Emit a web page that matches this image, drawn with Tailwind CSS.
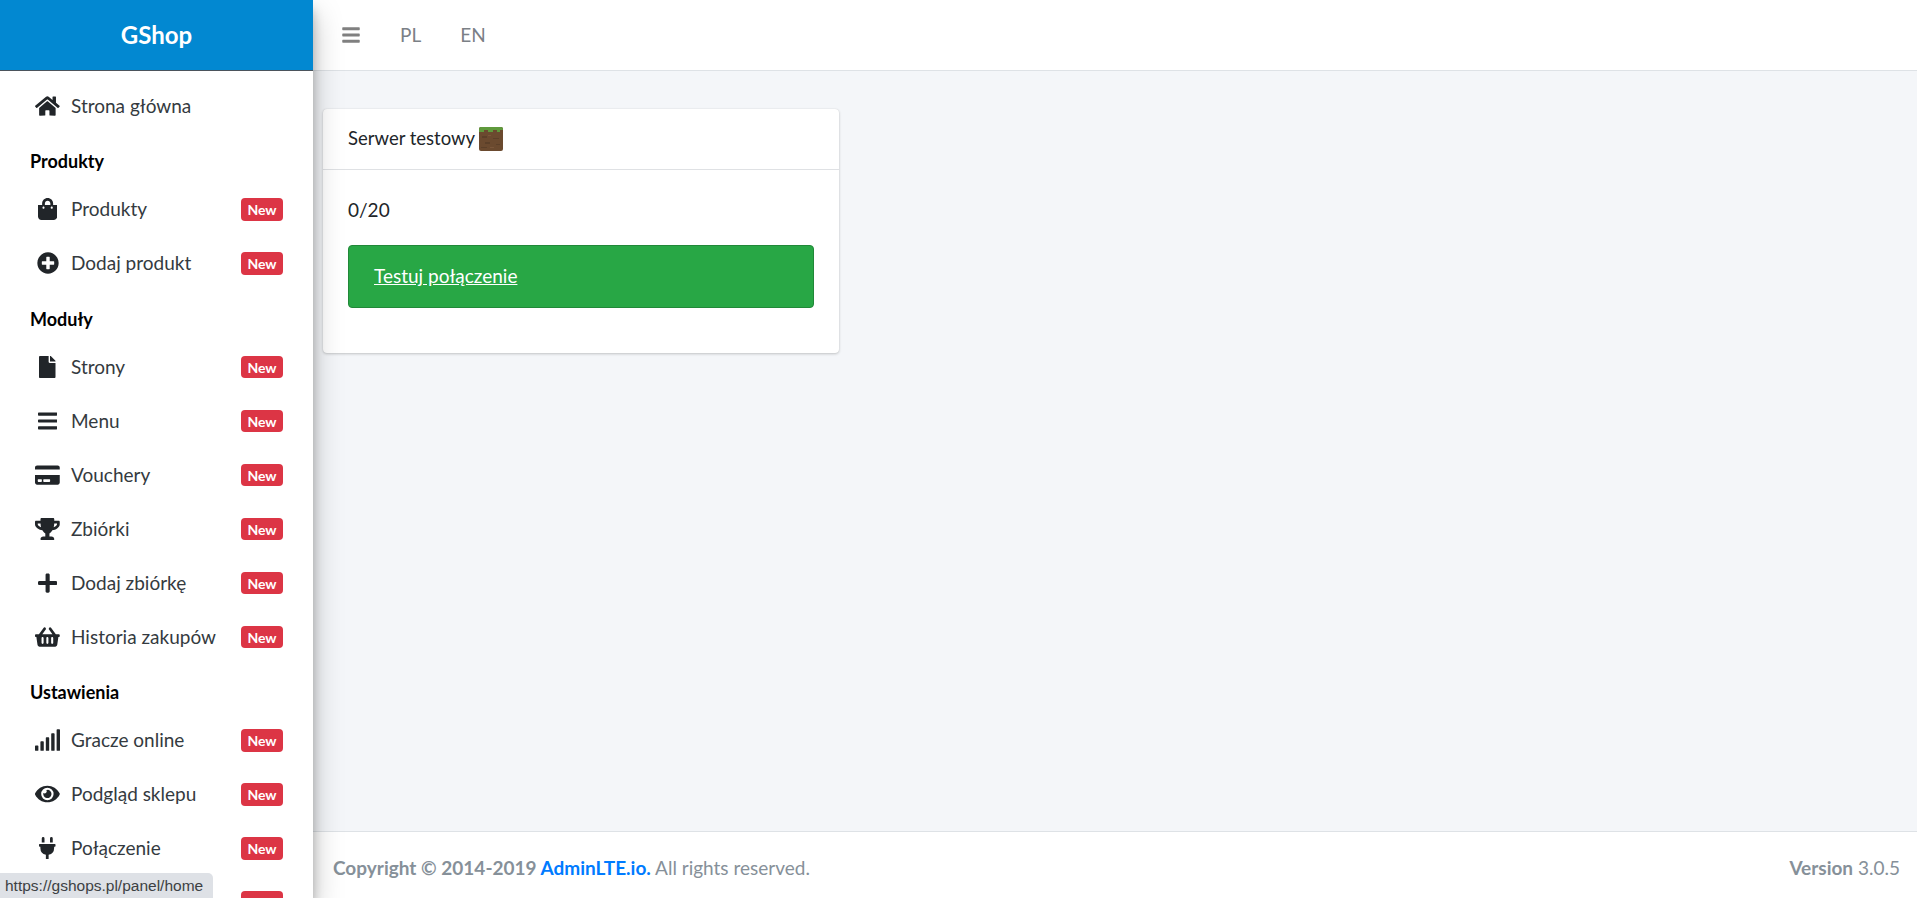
<!DOCTYPE html>
<html lang="pl">
<head>
    <meta charset="UTF-8">
    <title>GShop</title>
    <script src="https://cdn.jsdelivr.net/npm/@tailwindcss/browser@4"></script>
</head>
<body class="h-screen overflow-hidden bg-[#f4f6f9] font-['Lato',sans-serif] text-[19px] text-[#212529]">
<div class="flex h-full">
    <!-- Sidebar -->
    <aside class="relative z-10 w-[313px] shrink-0 h-full overflow-hidden bg-white shadow-[0_14px_28px_rgba(0,0,0,0.25),0_10px_10px_rgba(0,0,0,0.22)]">
        <div class="h-[71px] flex items-center justify-center bg-[#0288d1] border-b border-[#4b545c] text-white text-[24px] font-bold">GShop</div>
        <nav class="pt-2 text-[#343a40]">
            <a class="h-[54px] flex items-center pl-[35px] pr-[30px]">
                <span class="w-[25px] mr-[11px] flex justify-center"><svg class="h-[22px] fill-[#212529]" viewBox="0 0 576 512"><path d="M280.37 148.26L96 300.11V464a16 16 0 0 0 16 16l112.06-.29a16 16 0 0 0 15.92-16V368a16 16 0 0 1 16-16h64a16 16 0 0 1 16 16v95.64a16 16 0 0 0 16 16.05L464 480a16 16 0 0 0 16-16V300L295.67 148.26a12.19 12.19 0 0 0-15.3 0zM571.6 251.47L488 182.56V44.05a12 12 0 0 0-12-12h-56a12 12 0 0 0-12 12v72.61L318.47 43a48 48 0 0 0-61 0L4.34 251.47a12 12 0 0 0-1.6 16.9l25.5 31A12 12 0 0 0 45.15 301l235.22-193.74a12.19 12.19 0 0 1 15.3 0L530.9 301a12 12 0 0 0 16.9-1.6l25.5-31a12 12 0 0 0-1.7-16.93z"/></svg></span>
                <span class="flex-1">Strona główna</span>
            </a>
            <div class="mt-[7px] h-[42px] flex items-center pl-[30px] text-black font-bold text-[18px]">Produkty</div>
            <a class="h-[54px] flex items-center pl-[35px] pr-[30px]">
                <span class="w-[25px] mr-[11px] flex justify-center"><svg class="h-[22px] fill-[#212529]" viewBox="0 0 448 512"><path d="M352 160v-32C352 57.42 294.579 0 224 0 153.42 0 96 57.42 96 128v32H0v272c0 44.183 35.817 80 80 80h288c44.183 0 80-35.817 80-80V160h-96zm-192-32c0-35.29 28.71-64 64-64s64 28.71 64 64v32H160v-32zm160 120c-13.255 0-24-10.745-24-24s10.745-24 24-24 24 10.745 24 24-10.745 24-24 24zm-192 0c-13.255 0-24-10.745-24-24s10.745-24 24-24 24 10.745 24 24-10.745 24-24 24z"/></svg></span>
                <span class="flex-1">Produkty</span>
                <span class="w-[42px] h-[23px] flex items-center justify-center rounded bg-[#dc3545] text-white text-[14px] font-bold">New</span>
            </a>
            <a class="h-[54px] flex items-center pl-[35px] pr-[30px]">
                <span class="w-[25px] mr-[11px] flex justify-center"><svg class="h-[22px] fill-[#212529]" viewBox="0 0 512 512"><path d="M256 8C119 8 8 119 8 256s111 248 248 248 248-111 248-248S393 8 256 8zm144 276c0 6.6-5.4 12-12 12h-92v92c0 6.6-5.4 12-12 12h-56c-6.6 0-12-5.4-12-12v-92h-92c-6.6 0-12-5.4-12-12v-56c0-6.6 5.4-12 12-12h92v-92c0-6.6 5.4-12 12-12h56c6.6 0 12 5.4 12 12v92h92c6.6 0 12 5.4 12 12v56z"/></svg></span>
                <span class="flex-1">Dodaj produkt</span>
                <span class="w-[42px] h-[23px] flex items-center justify-center rounded bg-[#dc3545] text-white text-[14px] font-bold">New</span>
            </a>
            <div class="mt-2 h-[42px] flex items-center pl-[30px] text-black font-bold text-[18px]">Moduły</div>
            <a class="h-[54px] flex items-center pl-[35px] pr-[30px]">
                <span class="w-[25px] mr-[11px] flex justify-center"><svg class="h-[22px] fill-[#212529]" viewBox="0 0 384 512"><path d="M224 136V0H24C10.7 0 0 10.7 0 24v464c0 13.3 10.7 24 24 24h336c13.3 0 24-10.7 24-24V160H248c-13.2 0-24-10.8-24-24zm160-14.1v6.1H256V0h6.1c6.4 0 12.5 2.5 17 7l97.9 98c4.5 4.5 7 10.6 7 16.9z"/></svg></span>
                <span class="flex-1">Strony</span>
                <span class="w-[42px] h-[22px] flex items-center justify-center rounded bg-[#dc3545] text-white text-[14px] font-bold">New</span>
            </a>
            <a class="h-[54px] flex items-center pl-[35px] pr-[30px]">
                <span class="w-[25px] mr-[11px] flex justify-center"><svg class="h-[22px] fill-[#212529]" viewBox="0 0 448 512"><path d="M16 132h416c8.837 0 16-7.163 16-16V76c0-8.837-7.163-16-16-16H16C7.163 60 0 67.163 0 76v40c0 8.837 7.163 16 16 16zm0 160h416c8.837 0 16-7.163 16-16v-40c0-8.837-7.163-16-16-16H16c-8.837 0-16 7.163-16 16v40c0 8.837 7.163 16 16 16zm0 160h416c8.837 0 16-7.163 16-16v-40c0-8.837-7.163-16-16-16H16c-8.837 0-16 7.163-16 16v40c0 8.837 7.163 16 16 16z"/></svg></span>
                <span class="flex-1">Menu</span>
                <span class="w-[42px] h-[22px] flex items-center justify-center rounded bg-[#dc3545] text-white text-[14px] font-bold">New</span>
            </a>
            <a class="h-[54px] flex items-center pl-[35px] pr-[30px]">
                <span class="w-[25px] mr-[11px] flex justify-center"><svg class="h-[22px] fill-[#212529]" viewBox="0 0 576 512"><path d="M0 432c0 26.5 21.5 48 48 48h480c26.5 0 48-21.5 48-48V256H0v176zm192-68c0-6.6 5.4-12 12-12h136c6.6 0 12 5.4 12 12v40c0 6.6-5.4 12-12 12H204c-6.6 0-12-5.4-12-12v-40zm-128 0c0-6.6 5.4-12 12-12h72c6.6 0 12 5.4 12 12v40c0 6.6-5.4 12-12 12H76c-6.6 0-12-5.4-12-12v-40zM576 80v48H0V80c0-26.5 21.5-48 48-48h480c26.5 0 48 21.5 48 48z"/></svg></span>
                <span class="flex-1">Vouchery</span>
                <span class="w-[42px] h-[22px] flex items-center justify-center rounded bg-[#dc3545] text-white text-[14px] font-bold">New</span>
            </a>
            <a class="h-[54px] flex items-center pl-[35px] pr-[30px]">
                <span class="w-[25px] mr-[11px] flex justify-center"><svg class="h-[22px] fill-[#212529]" viewBox="0 0 576 512"><path d="M552 64H448V24c0-13.3-10.7-24-24-24H152c-13.3 0-24 10.7-24 24v40H24C10.7 64 0 74.7 0 88v56c0 35.7 22.5 72.4 61.9 100.7 31.5 22.7 69.8 37.1 110 41.7C203.3 338.5 240 360 240 360v72h-48c-35.3 0-64 20.7-64 56v12c0 6.6 5.4 12 12 12h296c6.6 0 12-5.4 12-12v-12c0-35.3-28.7-56-64-56h-48v-72s36.7-21.5 68.1-73.6c40.3-4.6 78.6-19 110-41.7 39.3-28.3 61.9-65 61.9-100.7V88c0-13.3-10.7-24-24-24zM99.3 192.8C74.9 175.2 64 155.6 64 144v-16h64.2c1 32.6 5.8 61.2 12.8 86.2-15.1-5.2-29.2-12.4-41.7-21.4zM512 144c0 16.1-17.7 36.1-35.3 48.8-12.5 9-26.7 16.2-41.8 21.4 7-25 11.8-53.6 12.8-86.2H512v16z"/></svg></span>
                <span class="flex-1">Zbiórki</span>
                <span class="w-[42px] h-[22px] flex items-center justify-center rounded bg-[#dc3545] text-white text-[14px] font-bold">New</span>
            </a>
            <a class="h-[54px] flex items-center pl-[35px] pr-[30px]">
                <span class="w-[25px] mr-[11px] flex justify-center"><svg class="h-[22px] fill-[#212529]" viewBox="0 0 448 512"><path d="M416 208H272V64c0-17.67-14.33-32-32-32h-32c-17.67 0-32 14.33-32 32v144H32c-17.67 0-32 14.33-32 32v32c0 17.67 14.33 32 32 32h144v144c0 17.67 14.33 32 32 32h32c17.67 0 32-14.33 32-32V304h144c17.67 0 32-14.33 32-32v-32c0-17.67-14.33-32-32-32z"/></svg></span>
                <span class="flex-1">Dodaj zbiórkę</span>
                <span class="w-[42px] h-[22px] flex items-center justify-center rounded bg-[#dc3545] text-white text-[14px] font-bold">New</span>
            </a>
            <a class="h-[54px] flex items-center pl-[35px] pr-[30px]">
                <span class="w-[25px] mr-[11px] flex justify-center"><svg class="h-[22px] fill-[#212529]" viewBox="0 0 576 512"><path d="M576 216v16c0 13.255-10.745 24-24 24h-8l-26.113 182.788C514.509 462.435 494.257 480 470.37 480H105.63c-23.887 0-44.139-17.565-47.518-41.212L32 256h-8c-13.255 0-24-10.745-24-24v-16c0-13.255 10.745-24 24-24h67.341l106.78-146.821c10.395-14.292 30.407-17.453 44.701-7.058 14.293 10.395 17.453 30.408 7.058 44.701L170.477 192h235.046L326.12 82.821c-10.395-14.292-7.234-34.306 7.059-44.701 14.291-10.395 34.306-7.235 44.701 7.058L484.659 192H552c13.255 0 24 10.745 24 24zM312 392V280c0-13.255-10.745-24-24-24s-24 10.745-24 24v112c0 13.255 10.745 24 24 24s24-10.745 24-24zm112 0V280c0-13.255-10.745-24-24-24s-24 10.745-24 24v112c0 13.255 10.745 24 24 24s24-10.745 24-24zm-224 0V280c0-13.255-10.745-24-24-24s-24 10.745-24 24v112c0 13.255 10.745 24 24 24s24-10.745 24-24z"/></svg></span>
                <span class="flex-1">Historia zakupów</span>
                <span class="w-[42px] h-[22px] flex items-center justify-center rounded bg-[#dc3545] text-white text-[14px] font-bold">New</span>
            </a>
            <div class="mt-[7px] h-[42px] flex items-center pl-[30px] text-black font-bold text-[18px]">Ustawienia</div>
            <a class="h-[54px] flex items-center pl-[35px] pr-[30px]">
                <span class="w-[25px] mr-[11px] flex justify-center"><svg class="h-[22px] w-[27px] max-w-none shrink-0 fill-[#212529]" viewBox="0 0 640 512"><path d="M216 288h-48c-8.84 0-16 7.16-16 16v192c0 8.84 7.16 16 16 16h48c8.84 0 16-7.16 16-16V304c0-8.84-7.16-16-16-16zM88 384H40c-8.84 0-16 7.16-16 16v96c0 8.84 7.16 16 16 16h48c8.84 0 16-7.16 16-16v-96c0-8.84-7.16-16-16-16zm256-192h-48c-8.84 0-16 7.16-16 16v288c0 8.84 7.16 16 16 16h48c8.84 0 16-7.16 16-16V208c0-8.84-7.16-16-16-16zm128-96h-48c-8.84 0-16 7.16-16 16v384c0 8.84 7.16 16 16 16h48c8.84 0 16-7.16 16-16V112c0-8.84-7.16-16-16-16zM600 0h-48c-8.84 0-16 7.16-16 16v480c0 8.84 7.16 16 16 16h48c8.84 0 16-7.16 16-16V16c0-8.84-7.16-16-16-16z"/></svg></span>
                <span class="flex-1">Gracze online</span>
                <span class="w-[42px] h-[23px] flex items-center justify-center rounded bg-[#dc3545] text-white text-[14px] font-bold">New</span>
            </a>
            <a class="h-[54px] flex items-center pl-[35px] pr-[30px]">
                <span class="w-[25px] mr-[11px] flex justify-center"><svg class="h-[22px] fill-[#212529]" viewBox="0 0 576 512"><path d="M572.52 241.4C518.29 135.59 410.93 64 288 64S57.68 135.64 3.48 241.41a32.35 32.35 0 0 0 0 29.19C57.71 376.41 165.07 448 288 448s230.32-71.64 284.52-177.41a32.35 32.35 0 0 0 0-29.19zM288 400a144 144 0 1 1 144-144 143.93 143.93 0 0 1-144 144zm0-240a95.31 95.31 0 0 0-25.31 3.79 47.85 47.85 0 0 1-66.9 66.9A95.78 95.78 0 1 0 288 160z"/></svg></span>
                <span class="flex-1">Podgląd sklepu</span>
                <span class="w-[42px] h-[23px] flex items-center justify-center rounded bg-[#dc3545] text-white text-[14px] font-bold">New</span>
            </a>
            <a class="h-[54px] flex items-center pl-[35px] pr-[30px]">
                <span class="w-[25px] mr-[11px] flex justify-center"><svg class="h-[22px] fill-[#212529]" viewBox="0 0 384 512"><path d="M320,32a32,32,0,0,0-64,0v96h64Zm48,128H16A16,16,0,0,0,0,176v32a16,16,0,0,0,16,16H32v32A160.07,160.07,0,0,0,160,412.8V512h64V412.8A160.07,160.07,0,0,0,352,256V224h16a16,16,0,0,0,16-16V176A16,16,0,0,0,368,160ZM128,32a32,32,0,0,0-64,0v96h64Z"/></svg></span>
                <span class="flex-1">Połączenie</span>
                <span class="w-[42px] h-[23px] flex items-center justify-center rounded bg-[#dc3545] text-white text-[14px] font-bold">New</span>
            </a>
            <a class="h-[54px] flex items-center justify-end pl-[35px] pr-[30px]">
                <span class="w-[42px] h-[23px] flex items-center justify-center rounded bg-[#dc3545] text-white text-[14px] font-bold">New</span>
            </a>
        </nav>
    </aside>

    <!-- Main -->
    <div class="flex-1 flex flex-col min-w-0">
        <header class="h-[71px] shrink-0 flex items-center bg-white border-b border-[#dee2e6] text-[#7b8086]">
            <svg class="ml-[29px] w-[18px] h-[20px] fill-[#808080]" viewBox="0 0 448 512"><path d="M16 132h416c8.837 0 16-7.163 16-16V76c0-8.837-7.163-16-16-16H16C7.163 60 0 67.163 0 76v40c0 8.837 7.163 16 16 16zm0 160h416c8.837 0 16-7.163 16-16v-40c0-8.837-7.163-16-16-16H16c-8.837 0-16 7.163-16 16v40c0 8.837 7.163 16 16 16zm0 160h416c8.837 0 16-7.163 16-16v-40c0-8.837-7.163-16-16-16H16c-8.837 0-16 7.163-16 16v40c0 8.837 7.163 16 16 16z"/></svg>
            <span class="ml-[40px]">PL</span>
            <span class="ml-[39px]">EN</span>
        </header>
        <main class="flex-1 pl-[10px] pt-[38px]">
            <section class="w-[516px] h-[244px] bg-white rounded shadow-[0_0_1px_rgba(0,0,0,0.125),0_1px_3px_rgba(0,0,0,0.2)]">
                <div class="h-[61px] flex items-center gap-[4px] pl-[25px] pr-6 border-b border-[#dfe1e4]">
                    <span class="text-[18.5px]">Serwer testowy</span>
                    <svg class="w-[24px] h-[24px] rounded-[2px]" viewBox="0 0 16 16" shape-rendering="crispEdges">
                        <rect width="16" height="16" fill="#6b4a2f"/>
                        <rect width="16" height="2" fill="#5f9a3c"/>
                        <rect y="2" width="3" height="1" fill="#5f9a3c"/>
                        <rect x="6" y="2" width="3" height="1" fill="#5f9a3c"/>
                        <rect x="12" y="2" width="2" height="1" fill="#5f9a3c"/>
                        <rect x="2" y="6" width="3" height="1" fill="#5c4029"/>
                        <rect x="9" y="7" width="4" height="1" fill="#5c4029"/>
                        <rect x="4" y="10" width="3" height="1" fill="#5c4029"/>
                        <rect x="11" y="11" width="3" height="1" fill="#5c4029"/>
                        <rect x="1" y="13" width="4" height="1" fill="#5c4029"/>
                        <rect x="7" y="13" width="3" height="1" fill="#7a563a"/>
                        <rect x="6" y="5" width="2" height="1" fill="#7a563a"/>
                    </svg>
                </div>
                <div class="pl-[25px] pr-[25px] pt-[28px]">
                    <p class="h-[24px] leading-[24px] mb-[23px]">0/20</p>
                    <a class="h-[63px] flex items-center pl-[25px] rounded bg-[#28a745] border border-[#218838] text-white underline">Testuj połączenie</a>
                </div>
            </section>
        </main>
        <footer class="h-[67px] shrink-0 flex items-center justify-between pt-[7px] pl-5 pr-[17px] bg-white border-t border-[#dee2e6] text-[#869099]">
            <span><b>Copyright © 2014-2019 <a class="text-[#007bff]">AdminLTE.io.</a></b> All rights reserved.</span>
            <span><b>Version</b> 3.0.5</span>
        </footer>
    </div>
</div>

<!-- Browser status bubble -->
<div class="fixed z-20 left-0 bottom-0 w-[213px] h-[25px] pl-[5px] flex items-center rounded-tr-[5px] bg-[#dee1e6] text-[#3c4043] text-[15.5px] font-['Liberation_Sans',sans-serif]">https://gshops.pl/panel/home</div>
</body>
</html>
